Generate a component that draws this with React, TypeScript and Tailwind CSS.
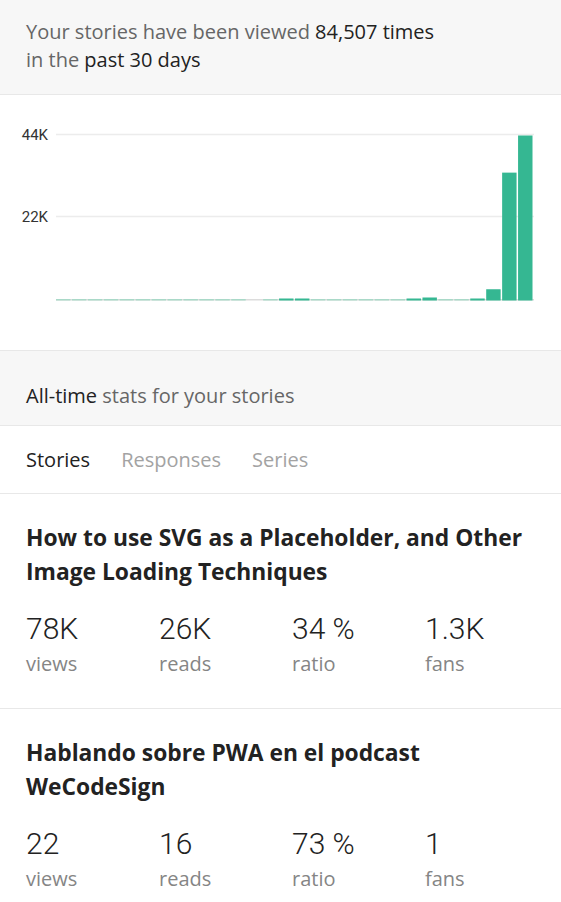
const bars: number[] = [
  0.2, 0.2, 0.2, 0.2, 0.2, 0.2, 0.2, 0.2, 0.2, 0.2, 0.2, 0.2, 0, 0.2, 0.5,
  0.5, 0.2, 0.2, 0.2, 0.2, 0.2, 0.2, 0.5, 0.8, 0.2, 0.2, 0.5, 3, 34.1, 44,
];

const stories = [
  {
    title: "How to use SVG as a Placeholder, and Other Image Loading Techniques",
    stats: [
      ["78K", "views"],
      ["26K", "reads"],
      ["34 %", "ratio"],
      ["1.3K", "fans"],
    ],
  },
  {
    title: "Hablando sobre PWA en el podcast WeCodeSign",
    stats: [
      ["22", "views"],
      ["16", "reads"],
      ["73 %", "ratio"],
      ["1", "fans"],
    ],
  },
];

function Chart() {
  const left = 56;
  const right = 534;
  const base = 204;
  const pitch = (right - left) / bars.length;
  const perK = 165 / 44;

  return (
    <svg width="561" height="255" viewBox="0 0 561 255" className="block">
      <line x1={left} x2={right} y1={39.5} y2={39.5} stroke="#ececec" strokeWidth="1.5" />
      <line x1={left} x2={right} y1={121.5} y2={121.5} stroke="#ececec" strokeWidth="1.5" />
      <text x="48" y="45" textAnchor="end" fontSize="15" fill="#333" fontFamily="Roboto, sans-serif">
        44K
      </text>
      <text x="48" y="127" textAnchor="end" fontSize="15" fill="#333" fontFamily="Roboto, sans-serif">
        22K
      </text>
      <rect x={left} y={base} width={right - left} height="1.5" fill="#dcdcdc" />
      {bars.map((v, i) => {
        if (v === 0) return null;
        const small = v < 0.4;
        const h = Math.max(v * perK, small ? 1.5 : 2);
        return (
          <rect
            key={i}
            x={left + i * pitch}
            y={base + 1.5 - h}
            width={pitch - 1.5}
            height={h}
            fill={small ? "#a9d9c8" : "#35b792"}
          />
        );
      })}
    </svg>
  );
}

function StoryCard({ title, stats }: { title: string; stats: string[][] }) {
  return (
    <article className="border-b border-[#e8e8e8] pt-[27px] pb-[31px] pl-[26px] pr-[26px]">
      <h2 className="text-[22.8px] leading-[34px] font-bold text-[#222]">{title}</h2>
      <div className="grid grid-cols-[133px_133px_133px_133px] mt-[22px]">
        {stats.map(([num, label]) => (
          <div key={label} className="flex flex-col">
            <span className="font-['Roboto',sans-serif] font-light text-[30px] leading-[36px] text-[#222]">
              {num}
            </span>
            <span className="mt-[4px] text-[20px] leading-[26px] text-[#858585]">{label}</span>
          </div>
        ))}
      </div>
    </article>
  );
}

export default function App() {
  return (
    <div className="w-[561px] min-h-[902px] bg-white font-['Open_Sans',sans-serif] overflow-hidden">
      <section className="bg-[#f7f7f7] border-b border-[#e8e8e8] pt-[18px] pb-[20px] px-[26px] text-[20px] leading-[28px] text-[#666]">
        <p>
          Your stories have been viewed <span className="text-[#222]">84,507 times</span>
          <br />
          in the <span className="text-[#222]">past 30 days</span>
        </p>
      </section>

      <section className="h-[256px] border-b border-[#e8e8e8]">
        <Chart />
      </section>

      <section className="bg-[#f7f7f7] border-b border-[#e8e8e8] pt-[31px] pb-[15px] px-[26px] text-[20px] leading-[28px] text-[#666]">
        <span className="text-[#222]">All-time</span> stats for your stories
      </section>

      <nav className="flex gap-[31px] border-b border-[#e8e8e8] pt-[20px] pb-[19px] px-[26px] text-[20px] leading-[28px]">
        <span className="text-[#222]">Stories</span>
        <span className="text-[#a3a3a3]">Responses</span>
        <span className="text-[#a3a3a3]">Series</span>
      </nav>

      {stories.map((s) => (
        <StoryCard key={s.title} title={s.title} stats={s.stats} />
      ))}
    </div>
  );
}
